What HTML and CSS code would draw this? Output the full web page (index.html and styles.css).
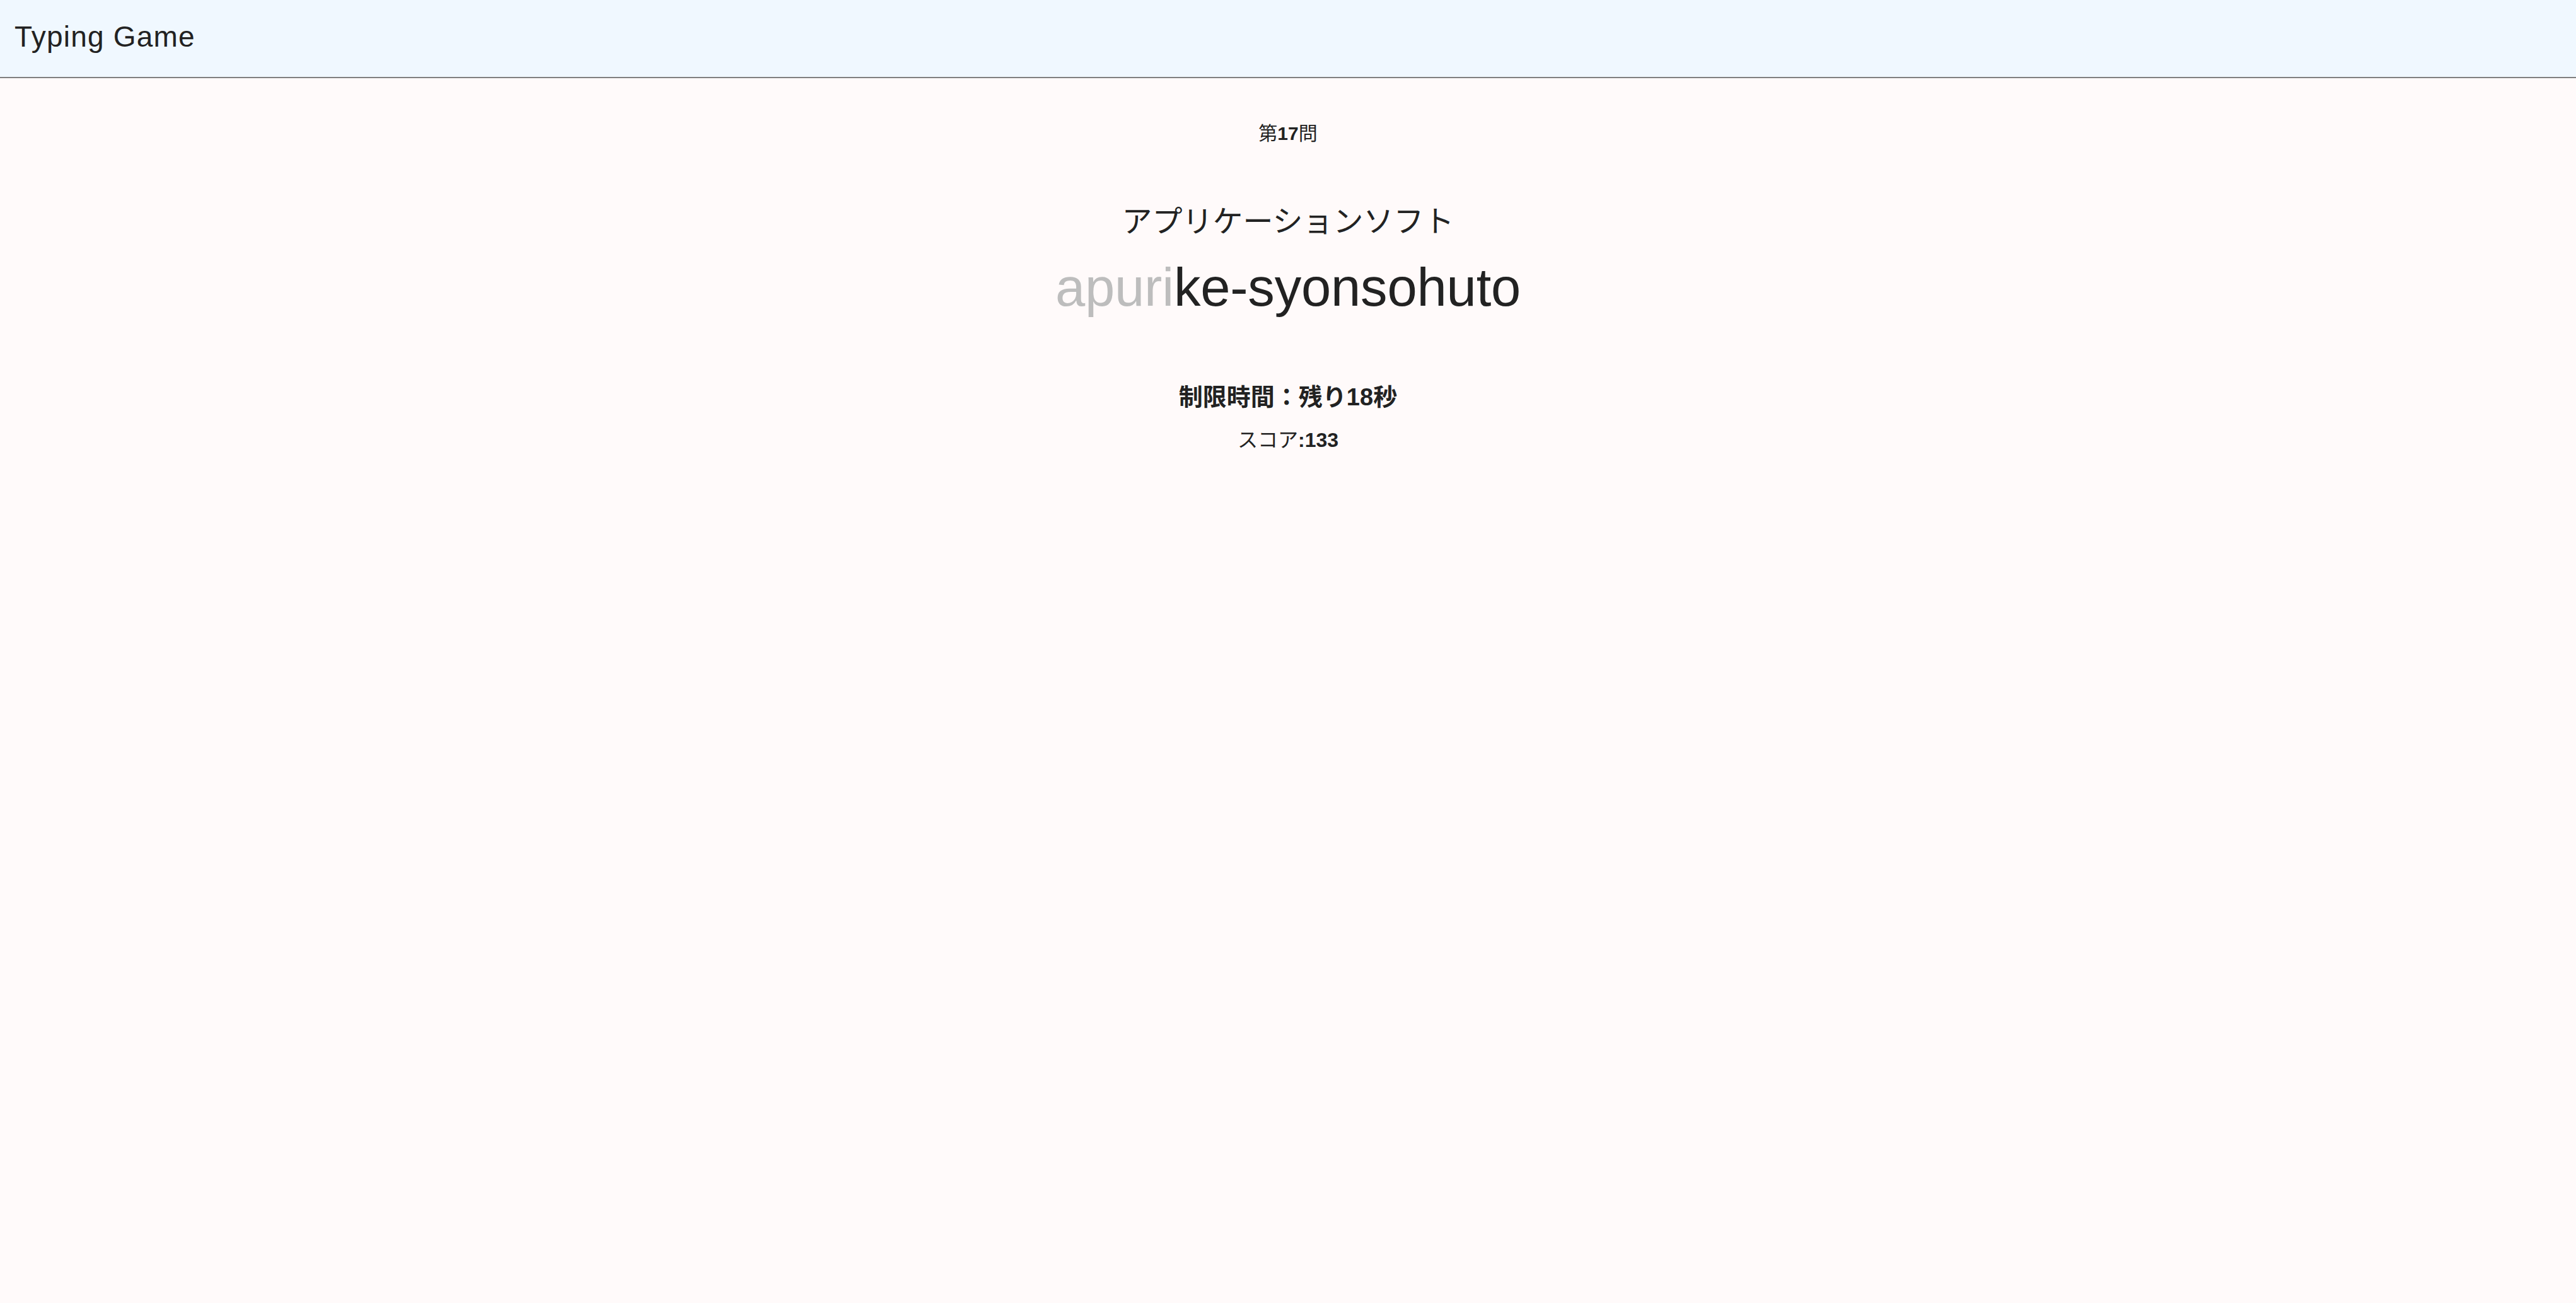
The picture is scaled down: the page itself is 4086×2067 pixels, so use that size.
FILE: index.html
```html
<!DOCTYPE html>
<html lang="ja">
<head>
<meta charset="utf-8">
<title>Typing Game</title>
<link rel="stylesheet" href="styles.css">
</head>
<body>
<header class="app-header">
  <h1 class="app-title">Typing Game</h1>
</header>
<main class="game">
  <p class="question-no">第<b>17</b>問</p>
  <p class="word-kana">アプリケーションソフト</p>
  <p class="word-roman"><span class="typed">apuri</span><span class="rest">ke-syonsohuto</span></p>
  <p class="time-left">制限時間：残り18秒</p>
  <p class="score">スコア<b>:133</b></p>
</main>
</body>
</html>
```

FILE: styles.css
```css
html, body {
  margin: 0;
  padding: 0;
}
body {
  background: #fffafa;
  color: #222222;
  font-family: "Liberation Sans", "Noto Sans CJK JP", sans-serif;
  min-height: 2067px;
}
.app-header {
  height: 122px;
  background: #f0f8ff;
  border-bottom: 2px solid #808080;
  display: flex;
  align-items: center;
  padding-left: 23px;
}
.app-title {
  margin: 0;
  font-size: 46px;
  font-weight: normal;
  line-height: 1;
  letter-spacing: 1.2px;
  position: relative;
  top: -3px;
}
.game {
  display: flex;
  flex-direction: column;
  align-items: center;
  padding-top: 73px;
}
.game p {
  margin: 0;
  line-height: 1;
}
.question-no {
  font-size: 30px;
}
.word-kana {
  font-size: 48px;
  margin-top: 101px !important;
}
.word-roman {
  font-size: 85px;
  margin-top: 37px !important;
  letter-spacing: -0.2px;
}
.typed {
  color: #bdbdbd;
}
.rest {
  color: #222222;
}
.time-left {
  font-size: 38px;
  font-weight: bold;
  margin-top: 113px !important;
}
.score {
  font-size: 32px;
  margin-top: 33px !important;
}
```
